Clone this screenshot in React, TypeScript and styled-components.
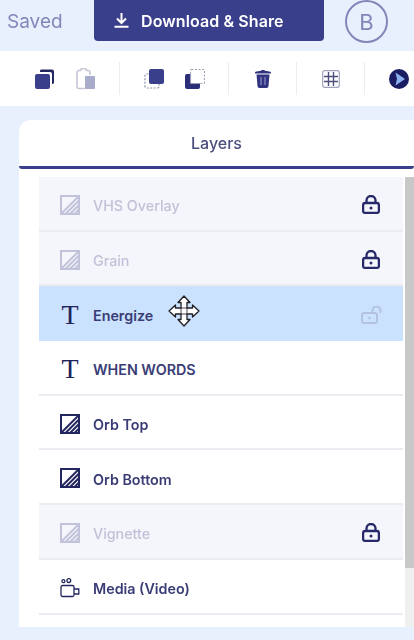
import styled, { createGlobalStyle } from "styled-components";

const NAVY = "#2b2f6e";

type Layer = {
  name: string;
  kind: "shape" | "text" | "media";
  locked?: boolean;
  selected?: boolean;
  unlock?: boolean;
};

const layers: Layer[] = [
  { name: "VHS Overlay", kind: "shape", locked: true },
  { name: "Grain", kind: "shape", locked: true },
  { name: "Energize", kind: "text", selected: true, unlock: true },
  { name: "WHEN WORDS", kind: "text" },
  { name: "Orb Top", kind: "shape" },
  { name: "Orb Bottom", kind: "shape" },
  { name: "Vignette", kind: "shape", locked: true },
  { name: "Media (Video)", kind: "media" },
];

const ShapeIcon = () => (
  <svg width="20" height="20" viewBox="0 0 20 20" fill="none" stroke="currentColor">
    <rect x="1" y="1" width="18" height="18" strokeWidth="2" />
    <path d="M1 19 19 1" strokeWidth="2" />
    <path d="M5.500 19 19 5.500M10 19l9-9M14.500 19l4.500-4.500" strokeWidth="2" />
  </svg>
);

const MediaIcon = () => (
  <svg width="20" height="20" viewBox="0 0 20 20" fill="none" stroke="currentColor" strokeWidth="1.300">
    <circle cx="3.400" cy="3.200" r="1.500" />
    <circle cx="8.800" cy="2.600" r="1.900" />
    <rect x="1" y="7.500" width="13" height="11" rx="1.500" />
    <path d="M14 11h4.800v5H14" />
  </svg>
);

const ClosedLock = () => (
  <svg width="18" height="19" viewBox="0 0 18 19" fill="none" stroke="currentColor" strokeWidth="2.300">
    <rect x="1.100" y="8" width="15.800" height="9.900" rx="2" />
    <path d="M4.500 8V5.500a4.500 4.500 0 0 1 9 0V8" />
    <circle cx="9" cy="13" r="1.500" fill="currentColor" stroke="none" />
  </svg>
);

const OpenLock = () => (
  <svg width="21" height="18" viewBox="0 0 21 18" fill="none" stroke="currentColor" strokeWidth="2">
    <rect x="1" y="7" width="15" height="10" rx="2" />
    <path d="M11.500 7V4.500a3.800 3.800 0 0 1 8 0V7" />
    <circle cx="8.500" cy="12" r="1.300" fill="currentColor" stroke="none" />
  </svg>
);

const MoveCursor = () => (
  <svg width="32" height="32" viewBox="0 0 32 32" fill="#fff" stroke="#1f1f24" strokeWidth="1.300" strokeLinejoin="round">
    <path d="M16 1l6 6.500h-3V13h5.500v-3l6.500 6-6.500 6v-3H19v5.500h3l-6 6.500-6-6.500h3V19H7.500v3L1 16l6.500-6v3H13V7.500h-3z" />
    <path d="M13 13h6v6h-6z" fill="none" strokeWidth="0.800" />
  </svg>
);

export default function App() {
  return (
    <Page>
      <GlobalStyle />
      <Header>
        <Saved>Saved</Saved>
        <DownloadButton>
          <svg width="15" height="15" viewBox="0 0 15 15" fill="none" stroke="#fff" strokeWidth="2">
            <path d="M7.500 0v9M3 5.500l4.500 4.500L12 5.500M0.500 13.800h14" />
          </svg>
          Download &amp; Share
        </DownloadButton>
        <Avatar>B</Avatar>
      </Header>

      <Toolbar>
        <ToolIcon>
          <svg width="20" height="22" viewBox="0 0 20 22">
            <path d="M6 1.500h11a2 2 0 0 1 2 2V15a2 2 0 0 1-2 1V6a2 2 0 0 0-2-2H5a2 2 0 0 1 1-2.500z" fill="#23265f" />
            <rect x="0" y="6" width="15" height="15" rx="2" fill="#3a3f8c" />
          </svg>
        </ToolIcon>
        <ToolIcon>
          <svg width="20" height="22" viewBox="0 0 20 22" fill="none">
            <path d="M9 20.500H3a2 2 0 0 1-2-2V4.500a2 2 0 0 1 2-2h1.500a3 2 0 0 1 6 0H12a2 2 0 0 1 2 2V7" stroke="#c5c7d6" strokeWidth="1.600" />
            <rect x="9" y="8" width="10" height="13" rx="1" fill="#a9abcb" />
          </svg>
        </ToolIcon>
        <Divider />
        <ToolIcon>
          <svg width="20" height="20" viewBox="0 0 20 20" fill="none">
            <rect x="1" y="5" width="14" height="14" rx="1.500" stroke="#8f91a8" strokeWidth="1.200" strokeDasharray="2 1.500" />
            <rect x="5" y="0" width="15" height="15" rx="2" fill="#3a3f8c" />
          </svg>
        </ToolIcon>
        <ToolIcon>
          <svg width="20" height="20" viewBox="0 0 20 20" fill="none">
            <rect x="0" y="5" width="15" height="15" rx="2" fill="#2b2f7a" />
            <rect x="5.500" y="0.500" width="14" height="14" rx="1" fill="#fff" stroke="#a2a4b6" strokeWidth="1.200" strokeDasharray="2 1.500" />
          </svg>
        </ToolIcon>
        <Divider />
        <ToolIcon>
          <svg width="18" height="19" viewBox="0 0 18 19">
            <path d="M1 3.500C1 2.500 5 2 6.500 2 7 .5 11 .5 11.500 2 13 2 17 2.500 17 3.500V4.500H1z" fill="#2f3380" />
            <path d="M2.500 5.500h13l-1 11.500a2 2 0 0 1-2 2h-7a2 2 0 0 1-2-2z" fill="#2f3380" />
            <path d="M7 8v8M11 8v8" stroke="#8e90c0" strokeWidth="1.200" />
          </svg>
        </ToolIcon>
        <Divider />
        <ToolIcon>
          <svg width="18" height="18" viewBox="0 0 18 18" fill="none" stroke="#4d507c">
            <rect x="0.700" y="0.700" width="16.600" height="16.600" rx="2" strokeWidth="1.200" stroke="#a0a2bc" />
            <path d="M6.500 2v14M11.500 2v14M2 6.500h14M2 11.500h14" strokeWidth="1.400" />
          </svg>
        </ToolIcon>
        <Divider />
        <ToolIcon>
          <svg width="20" height="20" viewBox="0 0 20 20">
            <circle cx="10" cy="10" r="10" fill="#1b1d63" />
            <path d="M6.500 3.500 16 10l-9.500 6.500L8 10z" fill="#8fb0ee" />
          </svg>
        </ToolIcon>
      </Toolbar>

      <Panel>
        <PanelTab>Layers</PanelTab>
        <PanelBody>
          <List>
            {layers.map((layer) => (
              <Row key={layer.name} $locked={layer.locked} $selected={layer.selected}>
                <RowIcon $faded={layer.locked}>
                  {layer.kind === "shape" && <ShapeIcon />}
                  {layer.kind === "text" && <TextGlyph>T</TextGlyph>}
                  {layer.kind === "media" && <MediaIcon />}
                </RowIcon>
                <RowName $faded={layer.locked}>{layer.name}</RowName>
                {layer.selected && (
                  <Cursor>
                    <MoveCursor />
                  </Cursor>
                )}
                {layer.locked && (
                  <LockSlot>
                    <ClosedLock />
                  </LockSlot>
                )}
                {layer.unlock && (
                  <LockSlot $faded>
                    <OpenLock />
                  </LockSlot>
                )}
              </Row>
            ))}
          </List>
          <ScrollTrack>
            <ScrollThumb />
          </ScrollTrack>
        </PanelBody>
      </Panel>
    </Page>
  );
}

const GlobalStyle = createGlobalStyle`
  html, body {
    margin: 0;
    background: #e9f0fd;
    overflow: hidden;
  }
  * {
    box-sizing: border-box;
  }
`;

const Page = styled.div`
  width: 414px;
  height: 640px;
  overflow: hidden;
  font-family: Inter, "Noto Sans", sans-serif;
  color: ${NAVY};
  filter: blur(0.35px);
`;

const Header = styled.div`
  height: 51px;
  display: flex;
  align-items: flex-start;
  padding-left: 7px;
`;

const Saved = styled.span`
  width: 87px;
  margin-top: 10px;
  font-size: 19px;
  line-height: 24px;
  color: #8187b9;
`;

const DownloadButton = styled.div`
  width: 230px;
  height: 41px;
  display: flex;
  align-items: center;
  gap: 12px;
  padding-left: 20px;
  background: #3a3f8c;
  border-radius: 0 0 4px 4px;
  color: #fff;
  font-size: 16px;
  font-weight: 600;
  letter-spacing: 0.1px;
`;

const Avatar = styled.div`
  width: 43px;
  height: 43px;
  margin-left: 21px;
  display: flex;
  align-items: center;
  justify-content: center;
  border: 2px solid #8187b9;
  border-radius: 50%;
  color: #8187b9;
  font-size: 22px;
`;

const Toolbar = styled.div`
  height: 55px;
  display: flex;
  align-items: center;
  padding-left: 35px;
  background: #fff;
`;

const ToolIcon = styled.div`
  width: 20px;
  display: flex;
  justify-content: center;
  & + & {
    margin-left: 21px;
  }
`;

const Divider = styled.div`
  width: 1px;
  height: 33px;
  margin: 0 24px 0 23px;
  background: #ecedf1;
`;

const Panel = styled.div`
  margin: 14px 0 0 19px;
  height: 507px;
  background: #fff;
  border-radius: 12px 0 0 0;
  display: flex;
  flex-direction: column;
`;

const PanelTab = styled.div`
  height: 49px;
  display: flex;
  align-items: center;
  justify-content: center;
  border-bottom: 3px solid #3a3f8c;
  border-radius: 0 0 3px 3px;
  font-size: 16px;
  font-weight: 500;
  color: #4a4d7d;
`;

const PanelBody = styled.div`
  flex: 1;
  display: flex;
  padding-top: 8px;
  min-height: 0;
`;

const List = styled.div`
  width: 364px;
  margin-left: 20px;
`;

const Row = styled.div<{ $locked?: boolean; $selected?: boolean }>`
  position: relative;
  height: 54.7px;
  display: flex;
  align-items: center;
  padding: ${(p) => (p.$selected ? "2px" : "3px")} 23px 0 21px;
  background: ${(p) => (p.$selected ? "#cae2fd" : p.$locked ? "#f5f6fb" : "#fff")};
  border-bottom: ${(p) => (p.$selected ? "none" : "2px solid #ebecf2")};
`;

const RowIcon = styled.div<{ $faded?: boolean }>`
  width: 20px;
  height: 24px;
  margin-right: 13px;
  display: flex;
  align-items: center;
  justify-content: center;
  color: ${(p) => (p.$faded ? "#c1c3da" : "#23265f")};
`;

const TextGlyph = styled.span`
  font-family: "Liberation Serif", serif;
  font-size: 28px;
  line-height: 24px;
  color: #1f2359;
`;

const RowName = styled.span<{ $faded?: boolean }>`
  flex: 1;
  padding-top: 2px;
  font-size: 14.3px;
  font-weight: ${(p) => (p.$faded ? 500 : 600)};
  color: ${(p) => (p.$faded ? "#c0c2d8" : "#3a3d75")};
`;

const LockSlot = styled.div<{ $faded?: boolean }>`
  display: flex;
  margin-right: ${(p) => (p.$faded ? "-2px" : "0")};
  color: ${(p) => (p.$faded ? "#b4c3dd" : "#27296a")};
`;

const Cursor = styled.div`
  position: absolute;
  left: 129px;
  top: 9px;
  display: flex;
`;

const ScrollTrack = styled.div`
  width: 9px;
  margin-left: 2px;
  background: #efefef;
`;

const ScrollThumb = styled.div`
  height: 391px;
  background: #c8c8c8;
`;
